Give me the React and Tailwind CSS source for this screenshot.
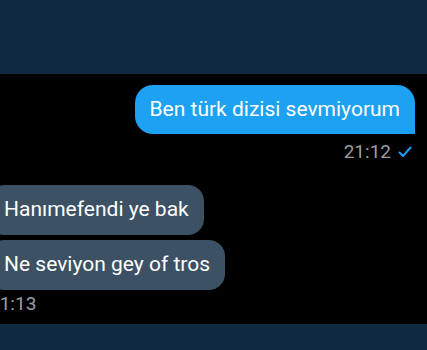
import React from "react";

function Check() {
    return (
        <svg width="14" height="12" viewBox="0 0 14 12" fill="none">
            <path d="M1.5 6.5 L5 10 L12.5 1.5" stroke="#1d9bf0" strokeWidth="2" strokeLinecap="round" strokeLinejoin="round" />
        </svg>
    );
}

export default function App() {
    return (
        <div
            className="w-[427px] h-[350px] bg-black flex flex-col overflow-hidden"
            style={{ fontFamily: "Roboto, 'Noto Sans', sans-serif" }}
        >
            {/* top bar */}
            <div className="h-[74px] bg-[#0f2a40] shrink-0" />

            <div className="flex-1 flex flex-col">
                {/* outgoing */}
                <div className="flex justify-end pr-[12px] pt-[11px]">
                    <div className="h-[49px] px-[15px] flex items-center rounded-[18px] rounded-br-none bg-[#1da1f2] text-white text-[21px]">
                        Ben türk dizisi sevmiyorum
                    </div>
                </div>
                <div className="flex justify-end items-center gap-[7px] pr-[15px] mt-[8px] h-[20px]">
                    <span className="text-[19px] text-[#9a9fa4]">21:12</span>
                    <Check />
                </div>

                {/* incoming */}
                <div className="flex flex-col items-start gap-[5px] mt-[23px] -ml-[12px]">
                    <div className="h-[50px] pl-[16px] pr-[15px] flex items-center rounded-[16px] bg-[#3c5264] text-white text-[21px]">
                        Hanımefendi ye bak
                    </div>
                    <div className="h-[50px] pl-[16px] pr-[15px] flex items-center rounded-[16px] bg-[#3c5264] text-white text-[21px]">
                        Ne seviyon gey of tros
                    </div>
                </div>
                <div className="-ml-[11px] mt-[1px] text-[19px] leading-[26px] text-[#9a9fa4]">21:13</div>
            </div>

            {/* bottom bar */}
            <div className="h-[26px] bg-[#0f2a40] shrink-0" />
        </div>
    );
}
